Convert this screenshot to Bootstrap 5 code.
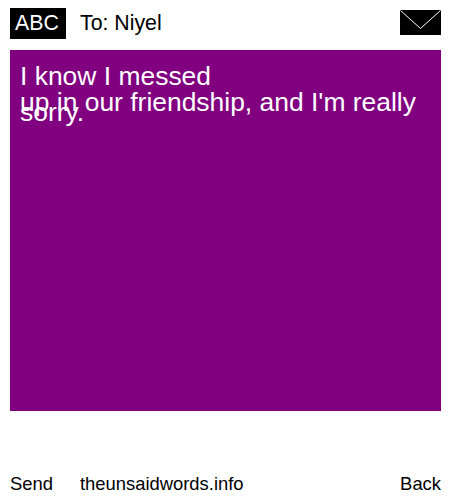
<!DOCTYPE html>
<html lang="en"><head><meta charset="utf-8"><title>The Unsaid Words</title>
<link href="https://cdn.jsdelivr.net/npm/bootstrap@5.3.0/dist/css/bootstrap.min.css" rel="stylesheet">
<style>
html,body{height:500px;overflow:hidden}
body{font-family:"Liberation Sans",Arial,sans-serif;color:#000;background:#fff;width:450px}
.phone-shell{height:500px;padding:8px 9px 0 10px}
.top-row{height:31px}
.abc-box{width:56px;height:31px;font-size:21.3px;line-height:30px;padding-right:2px}
.to-label{font-size:21.3px;margin-left:14px;line-height:31px}
.env-icon{width:41px;height:25px;display:block;margin-top:2px}
.msg-panel{background:#800080;color:#fff;height:361px;margin-top:11px;padding:11px 10px;font-size:26.45px}
.msg-line{display:block;white-space:nowrap;line-height:30px}
.msg-l2{margin-top:-4px}
.msg-l3{margin-top:-20px}
.foot-row{margin-top:61px;font-size:18.4px;line-height:24px}
.foot-site{margin-left:27px}
</style></head><body>
<div class="phone-shell d-flex flex-column">
<div class="top-row d-flex align-items-start">
<div class="abc-box bg-black text-white text-center">ABC</div>
<div class="to-label flex-grow-1">To: Niyel</div>
<svg class="env-icon" viewBox="0 0 41 25" aria-hidden="true"><rect width="41" height="25" fill="#000"/><path d="M0.5 0.5 20.5 18.5 40.5 0.5" fill="none" stroke="#fff" stroke-width="1"/></svg>
</div>
<div class="msg-panel"><span class="msg-line">I know I messed</span><span class="msg-line msg-l2">up in our friendship, and I'm really</span><span class="msg-line msg-l3">sorry.</span></div>
<div class="foot-row d-flex"><span>Send</span><span class="foot-site flex-grow-1">theunsaidwords.info</span><span>Back</span></div>
</div>
<script src="https://cdn.jsdelivr.net/npm/bootstrap@5.3.0/dist/js/bootstrap.bundle.min.js"></script>
</body></html>
